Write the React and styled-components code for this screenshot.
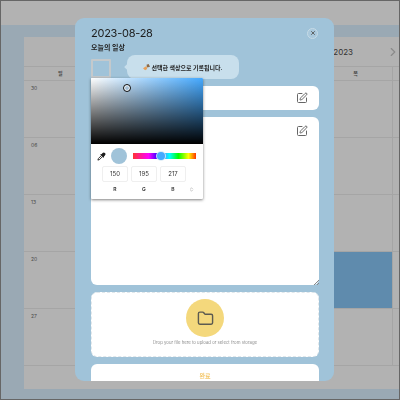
import styled, { createGlobalStyle } from "styled-components";
import { SquarePen, Folder, X, ChevronRight, ChevronsUpDown } from "lucide-react";

const GlobalStyle = createGlobalStyle`
    html, body {
        margin: 0;
        padding: 0;
        width: 400px;
        height: 400px;
        overflow: hidden;
        font-family: "Inter", "Noto Sans CJK KR", sans-serif;
    }
`;

const weekRows = [
    { label: "30" },
    { label: "06" },
    { label: "13" },
    { label: "20", highlight: true },
    { label: "27", next: "01" },
];

function App() {
    return (
        <>
            <GlobalStyle />
            <Page>
                <Main>
                    <TopSpace />
                    <Band />
                    <Calendar>
                        <YearRow>
                            <YearText>2023</YearText>
                            <ChevronRight size={14} color="#8a8a8a" />
                        </YearRow>
                        <DayHead>
                            <DayName>일</DayName>
                            <DayName />
                            <DayName />
                            <DayName />
                            <DayName>목</DayName>
                            <DayName />
                        </DayHead>
                        {weekRows.map((row) => (
                            <Week key={row.label}>
                                <Cell>{row.label}</Cell>
                                <Cell />
                                <Cell />
                                <Cell />
                                <Cell $highlight={row.highlight} />
                                <Cell>{row.next}</Cell>
                            </Week>
                        ))}
                    </Calendar>
                </Main>
                <Modal>
                    <TitleRow>
                        <Title>2023-08-28</Title>
                        <CloseButton>
                            <X size={6} strokeWidth={3.5} color="#555" />
                        </CloseButton>
                    </TitleRow>
                    <SubTitle>오늘의 일상</SubTitle>
                    <ColorRow>
                        <Swatch />
                        <Bubble>
                            <BubbleIcon viewBox="0 0 10 10">
                                <path d="M0 6 L5 3 L6 7 L3 9 Z" fill="#e8a15a" />
                                <path d="M5 1 L8 0 L10 4 L6 5 Z" fill="#8a6a4a" />
                            </BubbleIcon>
                            선택한 색상으로 기록됩니다.
                        </Bubble>
                    </ColorRow>
                    <TitleField>
                        <SquarePen size={12} color="#666" />
                    </TitleField>
                    <TextField>
                        <SquarePen size={12} color="#666" />
                        <ResizeGrip viewBox="0 0 6 6">
                            <path d="M1 6 L6 1 M4 6 L6 4" stroke="#888" strokeWidth="1" />
                        </ResizeGrip>
                    </TextField>
                    <DropZone>
                        <FolderCircle>
                            <Folder size={17} color="#5c5a50" />
                        </FolderCircle>
                        <DropText>Drop your file here to upload or select from storage</DropText>
                    </DropZone>
                    <DoneButton>완료</DoneButton>
                    <Picker>
                        <Saturation>
                            <PickerDot />
                        </Saturation>
                        <PickerBody>
                            <ControlRow>
                                <DropperIcon viewBox="0 0 10 10">
                                    <path d="M6.2 1.2 A1.5 1.5 0 0 1 8.8 3.8 L7.6 5 L8 5.6 L7 6.4 L3.6 3 L4.4 2.2 L5 2.6 Z" fill="#1c1c1c" />
                                    <path d="M4.4 4.4 L1.6 7.2 L1 9 L2.8 8.4 L5.6 5.6" fill="none" stroke="#1c1c1c" strokeWidth="1" />
                                </DropperIcon>
                                <PickerPreview />
                                <HueTrack>
                                    <HueThumb />
                                </HueTrack>
                            </ControlRow>
                            <ValueRow>
                                <ValueBox>150</ValueBox>
                                <ValueBox>195</ValueBox>
                                <ValueBox>217</ValueBox>
                            </ValueRow>
                            <LabelRow>
                                <ValueLabel>R</ValueLabel>
                                <ValueLabel>G</ValueLabel>
                                <ValueLabel>B</ValueLabel>
                                <ChevronsUpDown size={5} color="#777" />
                            </LabelRow>
                        </PickerBody>
                    </Picker>
                </Modal>
                <Frame />
            </Page>
        </>
    );
}

const Page = styled.div`
    position: relative;
    width: 400px;
    height: 400px;
    overflow: hidden;
    background-color: #9aa9b4;
    color: #444;
`;

const Frame = styled.div`
    position: absolute;
    inset: 0;
    border: 1px solid #666;
    pointer-events: none;
`;

const Main = styled.div`
    display: flex;
    flex-direction: column;
`;

const TopSpace = styled.div`
    height: 25px;
    background-color: #b2b2b2;
`;

const Band = styled.div`
    height: 12px;
`;

const Calendar = styled.div`
    margin-left: 24px;
    height: 352px;
    background-color: #b2b2b2;
    overflow: hidden;
`;

const YearRow = styled.div`
    height: 29px;
    display: flex;
    align-items: center;
    justify-content: flex-end;
    gap: 33px;
    box-sizing: border-box;
`;

const YearText = styled.span`
    font-size: 8px;
    color: #333;
`;

const DayHead = styled.div`
    display: grid;
    grid-template-columns: repeat(5, 73.8px) 20px;
    height: 15px;
    border-top: 1px solid #a5a5a5;
    border-bottom: 1px solid #a5a5a5;
    box-sizing: border-box;
`;

const DayName = styled.div`
    font-size: 5px;
    font-weight: 700;
    text-align: center;
    line-height: 13px;
    border-right: 1px solid #a5a5a5;
`;

const Week = styled.div`
    display: grid;
    grid-template-columns: repeat(5, 73.8px) 20px;
    height: 57px;
    border-bottom: 1px solid #a5a5a5;
    box-sizing: border-box;
`;

const Cell = styled.div`
    font-size: 5px;
    padding: 4px 7px;
    color: #4a4a4a;
    border-right: 1px solid #a5a5a5;
    background-color: ${(props) => (props.$highlight ? "#5f8bad" : "transparent")};
`;

const Modal = styled.div`
    position: absolute;
    left: 75px;
    top: 18px;
    width: 259px;
    height: 363px;
    padding: 0 15px 0 16px;
    box-sizing: border-box;
    background-color: #a0c3d9;
    border-radius: 9px;
    overflow: hidden;
    will-change: transform;
`;

const TitleRow = styled.div`
    height: 18px;
    padding-top: 6px;
    display: flex;
    align-items: center;
    justify-content: space-between;
`;

const Title = styled.div`
    font-size: 11px;
    letter-spacing: -0.25px;
    color: #1c1c1c;
`;

const CloseButton = styled.div`
    width: 11px;
    height: 11px;
    margin-right: 1px;
    border-radius: 50%;
    box-sizing: border-box;
    border: 1px solid #c6dbe7;
    background-color: #a9c8dc;
    display: flex;
    align-items: center;
    justify-content: center;
`;

const SubTitle = styled.div`
    height: 10px;
    margin-top: 1px;
    font-size: 7px;
    line-height: 10px;
    font-weight: 700;
    color: #222;
`;

const ColorRow = styled.div`
    display: flex;
    align-items: flex-start;
    gap: 16px;
    margin-top: 2px;
`;

const Swatch = styled.div`
    width: 20px;
    height: 19px;
    margin-top: 4px;
    box-sizing: border-box;
    border: 2px solid #c4c9cc;
    border-radius: 1px;
    background-color: #a0c3d9;
`;

const Bubble = styled.div`
    position: relative;
    width: 112px;
    height: 24px;
    border-radius: 8px;
    background-color: #c8dfec;
    font-size: 6px;
    font-weight: 700;
    color: #222;
    display: flex;
    align-items: center;
    justify-content: center;
    gap: 1px;
    &::before {
        content: "";
        position: absolute;
        left: -2px;
        top: 10px;
        width: 4px;
        height: 4px;
        background-color: #c8dfec;
        transform: rotate(45deg);
    }
`;

const BubbleIcon = styled.svg`
    width: 7px;
    height: 7px;
`;

const TitleField = styled.div`
    height: 24px;
    margin-top: 7px;
    background-color: #fff;
    border-radius: 6px;
    display: flex;
    align-items: center;
    justify-content: flex-end;
    padding-right: 11px;
`;

const TextField = styled.div`
    position: relative;
    height: 168px;
    margin-top: 7px;
    background-color: #fff;
    border-radius: 6px;
    display: flex;
    align-items: flex-start;
    justify-content: flex-end;
    padding: 8px 11px 0 0;
    box-sizing: border-box;
`;

const ResizeGrip = styled.svg`
    position: absolute;
    right: 0;
    bottom: 0;
    width: 6px;
    height: 6px;
`;

const DropZone = styled.div`
    height: 65px;
    margin-top: 7px;
    background-color: #fff;
    border: 1px dashed #e0e7eb;
    border-radius: 6px;
    box-sizing: border-box;
    display: flex;
    flex-direction: column;
    align-items: center;
    padding-top: 6px;
`;

const FolderCircle = styled.div`
    width: 38px;
    height: 38px;
    border-radius: 50%;
    background-color: #f4d87c;
    display: flex;
    align-items: center;
    justify-content: center;
`;

const DropText = styled.div`
    font-size: 4.3px;
    color: #8e8e8e;
    margin-top: 3px;
    white-space: nowrap;
`;

const DoneButton = styled.div`
    height: 30px;
    margin-top: 7px;
    padding-top: 7px;
    box-sizing: border-box;
    background-color: #fff;
    border-radius: 6px;
    font-size: 6px;
    font-weight: 700;
    text-align: center;
    color: #f4c76a;
`;

const Picker = styled.div`
    position: absolute;
    left: 16px;
    top: 60px;
    width: 112px;
    height: 121px;
    background-color: #fff;
    border-radius: 1px;
    box-shadow: 0 1px 3px rgba(0, 0, 0, 0.5);
    overflow: hidden;
`;

const Saturation = styled.div`
    position: relative;
    height: 66px;
    background: linear-gradient(to top, #000, transparent), linear-gradient(to right, #fff, #45a9ff);
`;

const PickerDot = styled.div`
    position: absolute;
    left: 32px;
    top: 6px;
    width: 6px;
    height: 6px;
    border: 1px solid #111;
    border-radius: 50%;
    box-shadow: inset 0 0 0 1px #fff;
`;

const PickerBody = styled.div`
    padding: 4px 6px 0 6px;
`;

const ControlRow = styled.div`
    display: flex;
    align-items: center;
    height: 16px;
`;

const DropperIcon = styled.svg`
    width: 9px;
    height: 9px;
`;

const PickerPreview = styled.div`
    width: 16px;
    height: 16px;
    margin-left: 5px;
    border-radius: 50%;
    background-color: #a0c3d9;
`;

const HueTrack = styled.div`
    position: relative;
    width: 63px;
    height: 6px;
    margin-left: 6px;
    background: linear-gradient(to right, #f33, #f0f 25%, #00f 42%, #4af 50%, #0ff 58%, #0f0 72%, #ff0 88%, #f30);
`;

const HueThumb = styled.div`
    position: absolute;
    left: 24px;
    top: -1px;
    width: 8px;
    height: 8px;
    border-radius: 50%;
    background-color: #45a9ff;
    box-shadow: 0 0 0 1px rgba(220, 235, 245, 0.9);
`;

const ValueRow = styled.div`
    display: flex;
    gap: 3px;
    margin: 2px 0 0 5px;
`;

const ValueBox = styled.div`
    width: 26px;
    height: 16px;
    border: 1px solid #efefef;
    border-radius: 2px;
    box-sizing: border-box;
    font-size: 6px;
    line-height: 14px;
    text-align: center;
    color: #333;
`;

const LabelRow = styled.div`
    display: flex;
    align-items: center;
    gap: 3px;
    margin: 4px 0 0 5px;
`;

const ValueLabel = styled.div`
    width: 26px;
    font-size: 5px;
    font-weight: 700;
    text-align: center;
    color: #444;
`;

export default App;
